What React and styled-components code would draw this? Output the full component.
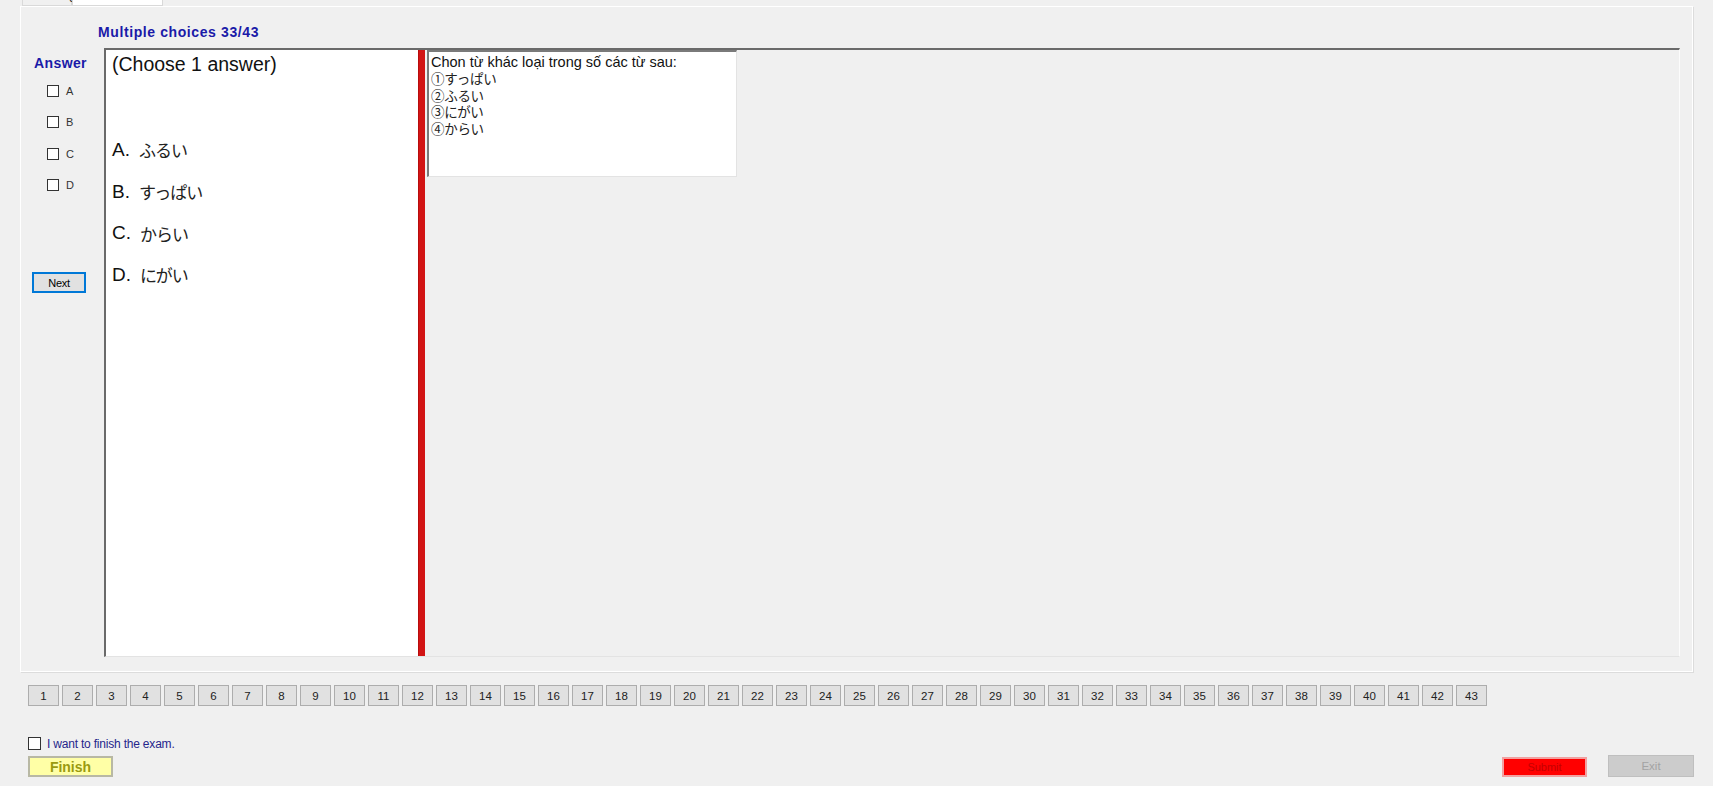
import React from 'react';
import styled, { createGlobalStyle } from 'styled-components';

const GlobalStyle = createGlobalStyle`
  body {
    margin: 0;
    background: #f0f0f0;
    font-family: "Liberation Sans", Arial, sans-serif;
  }
`;

const Window = styled.div`
  width: 1713px;
  height: 786px;
  display: flex;
  flex-direction: column;
  background: #f0f0f0;
  overflow: hidden;
`;

const TabStrip = styled.div`
  height: 6px;
  padding-left: 22px;
  display: flex;
  align-items: flex-end;
  overflow: hidden;
`;

const Tab = styled.div`
  height: 20px;
  padding: 0 ${(p) => (p.$active ? '14px' : '8px')};
  box-sizing: border-box;
  display: flex;
  align-items: flex-end;
  padding-bottom: 3px;
  font-size: 12px;
  color: #222;
  background: ${(p) => (p.$active ? '#ffffff' : '#f0f0f0')};
  border: 1px solid #d9d9d9;
  border-top: none;
  width: ${(p) => p.$w}px;
`;

const TabPage = styled.div`
  margin-left: 20px;
  width: 1673px;
  height: 666px;
  box-sizing: border-box;
  border: 1px solid #ffffff;
  box-shadow: 1px 1px 0 #dcdcdc;
  display: flex;
  flex-direction: column;
`;

const SectionTitle = styled.div`
  margin: 17px 0 0 77px;
  font-size: 14px;
  line-height: 16px;
  letter-spacing: 0.6px;
  font-weight: bold;
  color: #1a1aa8;
`;

const Body = styled.div`
  margin-top: 8px;
  height: 609px;
  display: flex;
`;

const AnswerCol = styled.div`
  width: 83px;
  display: flex;
  flex-direction: column;
  padding-top: 7px;
  box-sizing: border-box;
`;

const AnswerLabel = styled.div`
  margin-left: 13px;
  font-size: 14px;
  line-height: 16px;
  letter-spacing: 0.4px;
  font-weight: bold;
  color: #1a1aa8;
`;

const CheckList = styled.div`
  margin-top: 4px;
  display: flex;
  flex-direction: column;
`;

const CheckRow = styled.label`
  height: 31.5px;
  padding-left: 26px;
  display: flex;
  align-items: center;
  gap: 7px;
  font-size: 11px;
  color: #333;
`;

const Box = styled.span`
  width: ${(p) => p.$size || 12}px;
  height: ${(p) => p.$size || 12}px;
  box-sizing: border-box;
  border: 1px solid #333;
  background: #fff;
  flex-shrink: 0;
`;

const NextButton = styled.button`
  margin: 71px 0 0 11px;
  width: 54px;
  height: 21px;
  padding: 0;
  background: #e1e1e1;
  border: 1px solid #0078d7;
  box-shadow: inset 0 0 0 1px #0078d7;
  font-family: "Liberation Sans", Arial, sans-serif;
  font-size: 11px;
  color: #000;
  letter-spacing: -0.3px;
`;

const Frame = styled.div`
  width: 1576px;
  box-sizing: border-box;
  border-top: 2px solid #6a6a6a;
  border-left: 2px solid #6a6a6a;
  border-right: 1px solid #fcfcfc;
  border-bottom: 1px solid #e3e3e3;
  display: flex;
`;

const ChoicePane = styled.div`
  width: 312px;
  background: #ffffff;
  padding: 3px 6px;
  box-sizing: border-box;
`;

const Hint = styled.div`
  font-size: 19.5px;
  line-height: 22px;
  color: #111;
`;

const ChoiceList = styled.div`
  margin-top: 54px;
  display: flex;
  flex-direction: column;
`;

const Choice = styled.div`
  height: 41.7px;
  display: flex;
  align-items: center;
  font-size: 19px;
  color: #111;
`;

const Kana = styled.span`
  margin-left: 9px;
  font-family: "Noto Sans CJK JP", sans-serif;
  font-size: 17px;
  letter-spacing: -1px;
  color: #222;
`;

const Splitter = styled.div`
  width: 7px;
  background: #d21414;
  border-left: 1px solid #b80c0c;
  box-sizing: border-box;
`;

const QuestionPane = styled.div`
  flex: 1;
  padding-left: 2px;
`;

const QuestionBox = styled.div`
  width: 310px;
  height: 127px;
  box-sizing: border-box;
  background: #ffffff;
  border-top: 2px solid #7a7a7a;
  border-left: 2px solid #7a7a7a;
  border-right: 1px solid #e3e3e3;
  border-bottom: 1px solid #e3e3e3;
  padding: 3px 2px;
  font-family: "Liberation Sans", "Noto Sans CJK JP", sans-serif;
  font-size: 14.5px;
  line-height: 15px;
  color: #111;
`;

const QLine = styled.div`
  white-space: nowrap;
  ${(p) =>
    p.$cjk &&
    `
    font-family: "Noto Sans CJK JP", sans-serif;
    font-size: 13.5px;
    line-height: 16.5px;
    letter-spacing: -0.3px;
    color: #222;
  `}
`;

const NumberRow = styled.div`
  margin: 13px 0 0 28px;
  display: flex;
  gap: 3px;
`;

const NumButton = styled.button`
  width: 31px;
  height: 21px;
  padding: 0;
  background: #e1e1e1;
  border: 1px solid #adadad;
  font-family: "Liberation Sans", Arial, sans-serif;
  font-size: 11.5px;
  color: #222;
`;

const Footer = styled.div`
  margin-top: 31px;
  padding: 0 19px 0 28px;
  display: flex;
  justify-content: space-between;
  align-items: flex-end;
`;

const FinishCol = styled.div`
  display: flex;
  flex-direction: column;
  gap: 6px;
`;

const ConfirmRow = styled.label`
  display: flex;
  align-items: center;
  gap: 6px;
  height: 13px;
  font-size: 12px;
  color: #26268c;
  letter-spacing: -0.2px;
`;

const FinishButton = styled.button`
  width: 85px;
  height: 21px;
  padding: 0;
  background: #ffffa6;
  border: 2px solid #b8b8a4;
  font-family: "Liberation Sans", Arial, sans-serif;
  font-size: 14px;
  font-weight: bold;
  color: #9a9a10;
`;

const ActionGroup = styled.div`
  display: flex;
  align-items: flex-end;
  gap: 21px;
`;

const SubmitButton = styled.button`
  width: 85px;
  height: 20px;
  padding: 0;
  background: #ff0000;
  border: 2px solid #f2a0a0;
  font-family: "Liberation Sans", Arial, sans-serif;
  font-size: 11px;
  color: #c40000;
`;

const ExitButton = styled.button`
  width: 86px;
  height: 22px;
  padding: 0;
  background: #cccccc;
  border: 1px solid #bfbfbf;
  font-family: "Liberation Sans", Arial, sans-serif;
  font-size: 11.5px;
  color: #a3a3a3;
`;

const choices = [
  ['A.', 'ふるい'],
  ['B.', 'すっぱい'],
  ['C.', 'からい'],
  ['D.', 'にがい'],
];

const questionLines = [
  { text: 'Chon từ khác loại trong số các từ sau:' },
  { text: '①すっぱい', cjk: true },
  { text: '②ふるい', cjk: true },
  { text: '③にがい', cjk: true },
  { text: '④からい', cjk: true },
];

const numbers = Array.from({ length: 43 }, (_, i) => i + 1);

const App = () => {
  return (
    <Window>
      <GlobalStyle />
      <TabStrip>
        <Tab $w={50}>Reading</Tab>
        <Tab $w={91} $active>Multiple choices</Tab>
      </TabStrip>

      <TabPage>
        <SectionTitle>Multiple choices 33/43</SectionTitle>
        <Body>
          <AnswerCol>
            <AnswerLabel>Answer</AnswerLabel>
            <CheckList>
              {['A', 'B', 'C', 'D'].map((l) => (
                <CheckRow key={l}>
                  <Box />
                  {l}
                </CheckRow>
              ))}
            </CheckList>
            <NextButton>Next</NextButton>
          </AnswerCol>

          <Frame>
            <ChoicePane>
              <Hint>(Choose 1 answer)</Hint>
              <ChoiceList>
                {choices.map(([letter, word]) => (
                  <Choice key={letter}>
                    {letter}
                    <Kana>{word}</Kana>
                  </Choice>
                ))}
              </ChoiceList>
            </ChoicePane>
            <Splitter />
            <QuestionPane>
              <QuestionBox>
                {questionLines.map((line) => (
                  <QLine key={line.text} $cjk={line.cjk}>
                    {line.text}
                  </QLine>
                ))}
              </QuestionBox>
            </QuestionPane>
          </Frame>
        </Body>
      </TabPage>

      <NumberRow>
        {numbers.map((n) => (
          <NumButton key={n}>{n}</NumButton>
        ))}
      </NumberRow>

      <Footer>
        <FinishCol>
          <ConfirmRow>
            <Box $size={13} />
            I want to finish the exam.
          </ConfirmRow>
          <FinishButton>Finish</FinishButton>
        </FinishCol>
        <ActionGroup>
          <SubmitButton>Submit</SubmitButton>
          <ExitButton disabled>Exit</ExitButton>
        </ActionGroup>
      </Footer>
    </Window>
  );
};

export default App;
